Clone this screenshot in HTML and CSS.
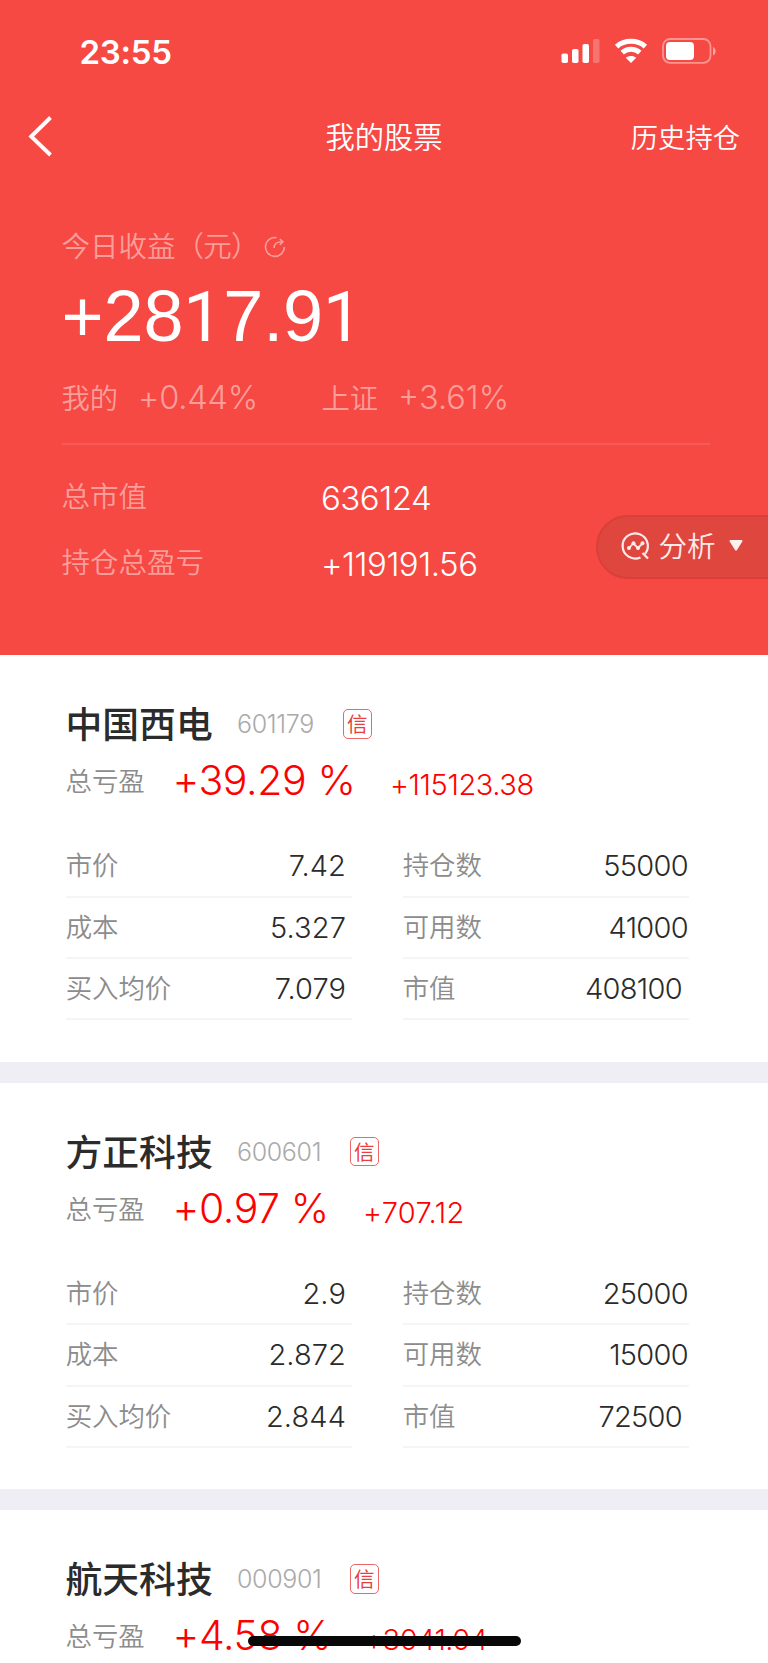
FILE: index.html
```html
<!DOCTYPE html>
<html lang="zh-CN">
<head>
<meta charset="utf-8">
<title>我的股票</title>
<link rel="stylesheet" href="styles.css">
</head>
<body>
<div class="screen">
  <header class="hero">
    <div class="status">
      <span class="clock">23:55</span>
      <span class="status-icons">
        <svg width="40" height="26" viewBox="0 0 40 26" fill="#fff"><rect x=".5" y="15.500" width="6.500" height="9.500" rx="1.800"/><rect x="11" y="11" width="6.500" height="14" rx="1.800"/><rect x="21.500" y="6" width="6.500" height="19" rx="1.800"/><rect x="32" y="1" width="6.500" height="24" rx="1.800" opacity=".24"/></svg>
        <svg class="wifi" width="34" height="26" viewBox="0 0 34 26" fill="none" stroke="#fff" stroke-width="5"><path d="M2.600 8.600C10.400 1.600 23.600 1.600 31.400 8.600"/><path d="M8.200 14.600C13 10.200 21 10.200 25.800 14.600"/><path d="M17 25L11.800 19.800C14.800 17.400 19.200 17.400 22.200 19.800Z" fill="#fff" stroke="none"/></svg>
        <svg width="55" height="26" viewBox="0 0 55 26"><rect x="1" y="1" width="47.500" height="23.800" rx="7" fill="none" stroke="#fff" stroke-opacity=".42" stroke-width="1.800"/><rect x="4" y="4" width="28" height="18" rx="4" fill="#fff"/><path d="M51 9v8.500c3.500-1.500 3.500-7 0-8.500z" fill="#fff" opacity=".5"/></svg>
      </span>
    </div>
    <nav class="nav">
      <svg class="back" width="24" height="42" viewBox="0 0 24 42" fill="none" stroke="#fff" stroke-width="3.900"><path d="M22.500 2.500L3.200 21.500L22.500 40"/></svg>
      <h1 class="title">我的股票</h1>
      <a class="history">历史持仓</a>
    </nav>
    <div class="summary">
      <div class="today">今日收益<span class="unit">（元）</span><svg width="22" height="22" viewBox="0 0 22 22" fill="none" stroke="#fff" stroke-width="1.600"><path d="M12.500 1.700A9.400 9.400 0 1 0 20.300 11"/><path d="M10 12C10 8 12.500 5.800 18.500 5.800M15.800 3L19 5.800L15.800 9"/></svg></div>
      <div class="gain">+28<i>1</i>7.9<i>1</i></div>
      <div class="rates">
        <div class="rate"><span>我的</span><span class="num mine">+0.44%</span></div>
        <div class="rate"><span>上证</span><span class="num index">+3.61%</span></div>
      </div>
      <dl class="totals">
        <dt>总市值</dt><dd class="market">636124</dd>
        <dt>持仓总盈亏</dt><dd class="profit">+119191.56</dd>
      </dl>
    </div>
    <div class="analyse">
      <svg width="30" height="30" viewBox="0 0 30 30" fill="none" stroke="#fdebea" stroke-width="2.200"><path d="M23.200 23.800A12.600 12.600 0 1 0 19.500 26.400M21.500 22L27 27.500"/><path d="M8 17L12.300 12.500L17 17L21.500 12.500" stroke-width="1.800"/><g fill="#fdebea" stroke="none"><circle cx="8" cy="17" r="2"/><circle cx="12.500" cy="12.200" r="2"/><circle cx="17" cy="17" r="2"/><circle cx="21.500" cy="12.200" r="2"/></g></svg>
      <span>分析</span>
      <svg class="caret" width="14" height="11" viewBox="0 0 14 11"><path d="M1.500 0h11q1.500.2.800 1.500L8 10q-1 1-2 0L.7 1.500Q0 .2 1.500 0z" fill="#fff"/></svg>
    </div>
  </header>

  <section class="stock">
    <div class="head"><h2>中国西电</h2><span class="code c1">601179</span><span class="badge">信</span></div>
    <div class="pl"><span class="pl-label">总亏盈</span><span class="pct p1">+39.29 %</span><span class="amt a1">+115123.38</span></div>
    <div class="cols">
      <dl><div><dt>市价</dt><dd>7.42</dd></div><div><dt>成本</dt><dd>5.327</dd></div><div><dt>买入均价</dt><dd>7.079</dd></div></dl>
      <dl class="right"><div><dt>持仓数</dt><dd>55000</dd></div><div><dt>可用数</dt><dd>41000</dd></div><div><dt>市值</dt><dd>408100</dd></div></dl>
    </div>
  </section>
  <section class="stock">
    <div class="head"><h2>方正科技</h2><span class="code c2">600601</span><span class="badge">信</span></div>
    <div class="pl"><span class="pl-label">总亏盈</span><span class="pct p2">+0.97 %</span><span class="amt a2">+707.12</span></div>
    <div class="cols">
      <dl><div><dt>市价</dt><dd>2.9</dd></div><div><dt>成本</dt><dd>2.872</dd></div><div><dt>买入均价</dt><dd>2.844</dd></div></dl>
      <dl class="right"><div><dt>持仓数</dt><dd>25000</dd></div><div><dt>可用数</dt><dd>15000</dd></div><div><dt>市值</dt><dd>72500</dd></div></dl>
    </div>
  </section>
  <section class="stock last">
    <div class="head"><h2>航天科技</h2><span class="code c2">000901</span><span class="badge">信</span></div>
    <div class="pl"><span class="pl-label">总亏盈</span><span class="pct p3">+4.58 %</span><span class="amt a3">+3041.04</span></div>
  </section>
  <div class="home"></div>
</div>
</body>
</html>
```
FILE: styles.css
```css
* { box-sizing: border-box; margin: 0; padding: 0; }
body { background: #fff; font-family: "Noto Sans CJK SC", sans-serif; font-weight: 350; }
svg { display: block; flex: none; }
.screen { position: relative; width: 768px; height: 1663px; overflow: hidden; background: #fff; }

.hero { position: relative; height: 655.300px; background: #f64944; color: #fff; }
.status { display: flex; justify-content: space-between; height: 100px; padding: 38px 51px 0 79.500px; }
.clock { font: 600 33px/28px Inter, sans-serif; letter-spacing: -.3px; }
.status-icons { display: flex; }
.wifi { margin: 0 14px 0 13px; }
.nav { display: grid; grid-template-columns: 200px 1fr 200px; align-items: center; height: 74px; padding: 0 28px; }
.back { margin-top: -2px; }
.title { font-size: 29.3px; font-weight: 350; text-align: center; line-height: 40px; margin-top: -4px; }
.history { font-size: 27.3px; text-align: right; line-height: 40px; margin-top: -3px; }
.summary { padding: 50px 58px 0 61.500px; }
.today { display: flex; align-items: center; height: 40px; color: rgba(255,255,255,.48); font-size: 28.5px; }
.unit { display: inline-block; letter-spacing: -.700px; margin-left: 0; }
.today svg { margin: 5px 0 0 5px; opacity: .45; }
.gain { font: 400 72px/84px "Liberation Sans", sans-serif; height: 84px; margin-top: 10px; letter-spacing: -.1px; }
.gain i { font-family: Roboto, sans-serif; font-style: normal; font-size: 70px; line-height: 1; letter-spacing: .5px; }
.rates { display: flex; height: 85px; padding-top: 17px; border-bottom: 2px solid rgba(255,255,255,.1); color: rgba(255,255,255,.48); font-size: 28.3px; line-height: 40px; margin-top: 2px; }
.rate { display: flex; width: 260px; gap: 20px; }
.num { font-family: Inter, sans-serif; font-size: 32.500px; font-weight: 300; line-height: 42px; }
.mine { letter-spacing: -.2px; }
.totals { display: grid; grid-template-columns: 259.500px 1fr; grid-auto-rows: 66px; padding-top: 20px; line-height: 66px; }
.totals dt { font-size: 28.5px; color: rgba(255,255,255,.48); line-height: 60px; }
.totals dd { font-family: Inter, sans-serif; font-size: 33px; font-weight: 360; }
.market { letter-spacing: -.5px; }
.profit { letter-spacing: -.5px; }
.analyse { position: absolute; left: 596px; top: 515px; display: flex; align-items: center; width: 180px; height: 64px; padding-left: 23px; border: 2px solid #d93f3b; border-radius: 32px 0 0 32px; background: #df473e; font-size: 28.5px; line-height: 40px; color: #fdebea; }
.analyse svg { margin-top: -2px; }
.analyse span { margin: -4px 0 0 7.500px; }
.analyse .caret { margin: -3px 0 0 13px; opacity: .92; }

.stock { height: 427.500px; padding: 41px 77px 0 66px; border-bottom: 21px solid #eeeef4; }
.head { display: flex; align-items: center; height: 56px; }
h2 { width: 171.500px; font-size: 36.8px; font-weight: 500; color: #2b2b2b; line-height: 50px; margin: -4px 0 0 -.5px; }
.code { font: 300 25px/30px Inter, sans-serif; color: #aaa; letter-spacing: -.35px; }
.c1 { width: 105.500px; }
.c2 { width: 112.500px; }
.badge { width: 29.500px; height: 29.500px; margin-top: -1px; border: 1.500px solid #ee6565; border-radius: 5px; color: #e83e3e; font-size: 20.500px; line-height: 26px; text-align: center; font-weight: 400; }
.pl { display: flex; height: 56px; line-height: 56px; color: #f00; font-family: Inter, sans-serif; }
.pl-label { width: 107px; font-family: "Noto Sans CJK SC", sans-serif; font-size: 26.400px; color: #8c8c8c; margin-left: -.5px; line-height: 56px; }
.pct { font-size: 41px; white-space: pre; letter-spacing: -.4px; font-weight: 360; }
.p1 { width: 217.500px; } .p2 { width: 190.500px; } .p3 { width: 192px; }
.amt { font-size: 29px; line-height: 65px; font-weight: 360; }
.a1 { letter-spacing: -.4px; }
.a2 { letter-spacing: .4px; }
.a3 { letter-spacing: -.5px; }
.cols { display: flex; gap: 51px; margin-top: 28px; }
.cols dl { width: 286px; }
.cols dl div { display: flex; justify-content: space-between; height: 61.400px; line-height: 60px; border-bottom: 2px solid #f5f5f5; padding-right: 6px; }
.cols dt { font-size: 26.400px; color: #8c8c8c; line-height: 55px; margin-left: -.3px; }
.cols dd { font-family: Inter, sans-serif; font-size: 29px; color: #2b2b2b; font-weight: 360; letter-spacing: .1px; }
.cols .right div { padding-right: 1px; }
.cols .right div:last-child { padding-right: 7px; }
.cols .right dd { letter-spacing: -.7px; }
.last { border: 0; }
.home { position: absolute; left: 248px; top: 1636px; width: 273px; height: 10px; border-radius: 5px; background: #080808; }
```
